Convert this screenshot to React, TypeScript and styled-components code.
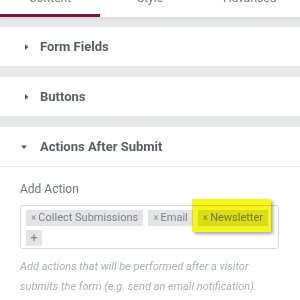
import React from "react";
import styled, { createGlobalStyle, css } from "styled-components";

const GlobalStyle = createGlobalStyle`
  html, body { margin: 0; padding: 0; }
  body {
    font-family: Roboto, "Liberation Sans", Arial, sans-serif;
    background: #e6e8ea;
    overflow: hidden;
  }
`;

const Panel = styled.div`
  width: 300px;
  height: 300px;
  overflow: hidden;
  background: #e6e8ea;
`;

const TabBar = styled.div`
  display: flex;
  margin-top: -13px;
  height: 30px;
  background: #fff;
  box-shadow: 0 1px 4px rgba(0, 0, 0, 0.1);
  position: relative;
`;

const Tab = styled.div<{ $active?: boolean }>`
  flex: 1;
  box-sizing: border-box;
  padding-top: 4px;
  text-align: center;
  font-size: 12px;
  line-height: 14px;
  color: #6d7882;
  border-bottom: 3px solid ${(p) => (p.$active ? "#7b1642" : "transparent")};
`;

const Sections = styled.div`
  display: flex;
  flex-direction: column;
  gap: 11px;
  padding-top: 10px;
`;

const Section = styled.div`
  background: #fff;
`;

const SectionHeader = styled.div<{ $open?: boolean }>`
  height: 39px;
  box-sizing: border-box;
  display: flex;
  align-items: center;
  padding-left: 20px;
  font-size: 13px;
  font-weight: 700;
  color: #585f66;
  ${(p) =>
    p.$open &&
    css`
      height: 40px;
      border-bottom: 1px solid #e6e9ec;
    `}
`;

const CaretBox = styled.svg`
  width: 12px;
  height: 12px;
  margin-right: 8px;
  flex: none;
  fill: #585f66;
`;

const Content = styled.div`
  padding: 15px 21px 20px 20px;
`;

const Label = styled.div`
  font-size: 12px;
  line-height: 14px;
  color: #6d7882;
  margin-bottom: 9px;
`;

const TagBox = styled.div`
  border: 1px solid #d5dadf;
  border-radius: 3px;
  padding: 4px 5px 2px 5px;
  display: flex;
  flex-wrap: wrap;
  gap: 4px 5px;
`;

const Tag = styled.span<{ $highlight?: boolean }>`
  position: relative;
  height: 16px;
  line-height: 16px;
  padding: 0 5px;
  font-size: 11px;
  color: #7b8288;
  background: #e3e4e5;
  white-space: nowrap;
  ${(p) =>
    p.$highlight &&
    css`
      &::after {
        content: "";
        position: absolute;
        top: -11px;
        left: -6px;
        right: -3px;
        bottom: -6px;
        background: #f6f61c;
        mix-blend-mode: multiply;
        box-shadow: 2px 2px 3px rgba(0, 0, 0, 0.35);
      }
    `}
`;

const Remove = styled.span`
  font-size: 10px;
  margin-right: 2px;
  color: #8a9096;
`;

const AddTag = styled(Tag)`
  width: 16px;
  padding: 0;
  text-align: center;
  font-size: 12px;
`;

const Help = styled.p`
  margin: 8px 0 0;
  font-size: 11px;
  line-height: 19.5px;
  font-style: italic;
  color: #a9b0b6;
`;

const CaretRight = () => (
  <CaretBox viewBox="0 0 12 12">
    <polygon points="5,3 8.5,6 5,9" />
  </CaretBox>
);

const CaretDown = () => (
  <CaretBox viewBox="0 0 12 12">
    <polygon points="1,4.5 7,4.5 4,8" />
  </CaretBox>
);

const tags = ["Collect Submissions", "Email", "Newsletter"];

export default function App() {
  return (
    <>
      <GlobalStyle />
      <Panel>
        <TabBar>
          <Tab $active>Content</Tab>
          <Tab>Style</Tab>
          <Tab>Advanced</Tab>
        </TabBar>
        <Sections>
          <Section>
            <SectionHeader>
              <CaretRight />
              Form Fields
            </SectionHeader>
          </Section>
          <Section>
            <SectionHeader>
              <CaretRight />
              Buttons
            </SectionHeader>
          </Section>
          <Section>
            <SectionHeader $open>
              <CaretDown />
              Actions After Submit
            </SectionHeader>
            <Content>
              <Label>Add Action</Label>
              <TagBox>
                {tags.map((t) => (
                  <Tag key={t} $highlight={t === "Newsletter"}>
                    <Remove>×</Remove>
                    {t}
                  </Tag>
                ))}
                <AddTag>+</AddTag>
              </TagBox>
              <Help>
                Add actions that will be performed after a visitor submits the
                form (e.g. send an email notification). Choosing an action will
                add its setting below.
              </Help>
            </Content>
          </Section>
        </Sections>
      </Panel>
    </>
  );
}
